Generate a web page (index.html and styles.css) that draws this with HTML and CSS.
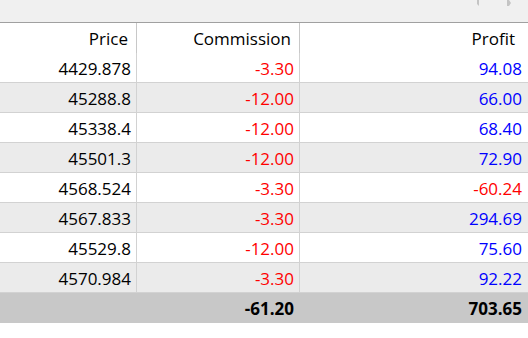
FILE: index.html
```html
<!DOCTYPE html>
<html>
<head>
<meta charset="utf-8">
<link rel="stylesheet" href="styles.css">
</head>
<body>
<div class="topbar">
  <svg class="arrows" width="40" height="8" viewBox="0 0 40 8">
    <polygon points="3,0 5,0 5,6 3,4" fill="#c4c4c4"/>
    <polygon points="33,0 35,0 37,3 35,6 33,6" fill="#c4c4c4"/>
  </svg>
</div>
<div class="grid">
  <div class="row head">
    <div class="cell hc">Price</div>
    <div class="cell hc">Commission</div>
    <div class="cell hc last">Profit</div>
  </div>
  <div class="row">
    <div class="cell">4429.878</div><div class="cell neg">-3.30</div><div class="cell pos last">94.08</div>
  </div>
  <div class="row alt">
    <div class="cell">45288.8</div><div class="cell neg">-12.00</div><div class="cell pos last">66.00</div>
  </div>
  <div class="row">
    <div class="cell">45338.4</div><div class="cell neg">-12.00</div><div class="cell pos last">68.40</div>
  </div>
  <div class="row alt">
    <div class="cell">45501.3</div><div class="cell neg">-12.00</div><div class="cell pos last">72.90</div>
  </div>
  <div class="row">
    <div class="cell">4568.524</div><div class="cell neg">-3.30</div><div class="cell neg last">-60.24</div>
  </div>
  <div class="row alt">
    <div class="cell">4567.833</div><div class="cell neg">-3.30</div><div class="cell pos last">294.69</div>
  </div>
  <div class="row">
    <div class="cell">45529.8</div><div class="cell neg">-12.00</div><div class="cell pos last">75.60</div>
  </div>
  <div class="row alt">
    <div class="cell">4570.984</div><div class="cell neg">-3.30</div><div class="cell pos last">92.22</div>
  </div>
  <div class="row total">
    <div class="cell"></div><div class="cell">-61.20</div><div class="cell last">703.65</div>
  </div>
</div>
</body>
</html>
```
FILE: styles.css
```css
html, body {
  margin: 0;
  padding: 0;
  background: #ffffff;
}
body {
  font-family: "Open Sans", "Noto Sans", sans-serif;
  font-size: 17px;
  color: #000;
  width: 528px;
  height: 338px;
  overflow: hidden;
}
.topbar {
  height: 22px;
  background: #f0f0f0;
  border-bottom: 1px solid #a0a0a0;
  position: relative;
}
.arrows {
  position: absolute;
  left: 474px;
  top: 0;
}
.row {
  display: grid;
  grid-template-columns: 137px 163px 1fr;
  height: 30px;
  box-sizing: border-box;
  border-bottom: 1px solid #d2d2d2;
}
.row.head {
  border-bottom: none;
}
.row.alt {
  background: #ebebeb;
}
.row.total {
  background: #c8c8c8;
  border-bottom: none;
  font-weight: bold;
}
.row.total .cell {
  border-right-color: transparent;
}
.cell {
  display: flex;
  align-items: center;
  justify-content: flex-end;
  padding: 1px 5px 0 0;
  border-right: 1px solid #d2d2d2;
  white-space: nowrap;
  line-height: 1;
}
.cell.last {
  border-right: none;
  padding-right: 6px;
}
.hc {
  padding-right: 8px;
  border-right-color: #c8c8c8;
}
.hc.last {
  padding-right: 13px;
}
.neg {
  color: #ff0000;
}
.pos {
  color: #0000ff;
}
```
